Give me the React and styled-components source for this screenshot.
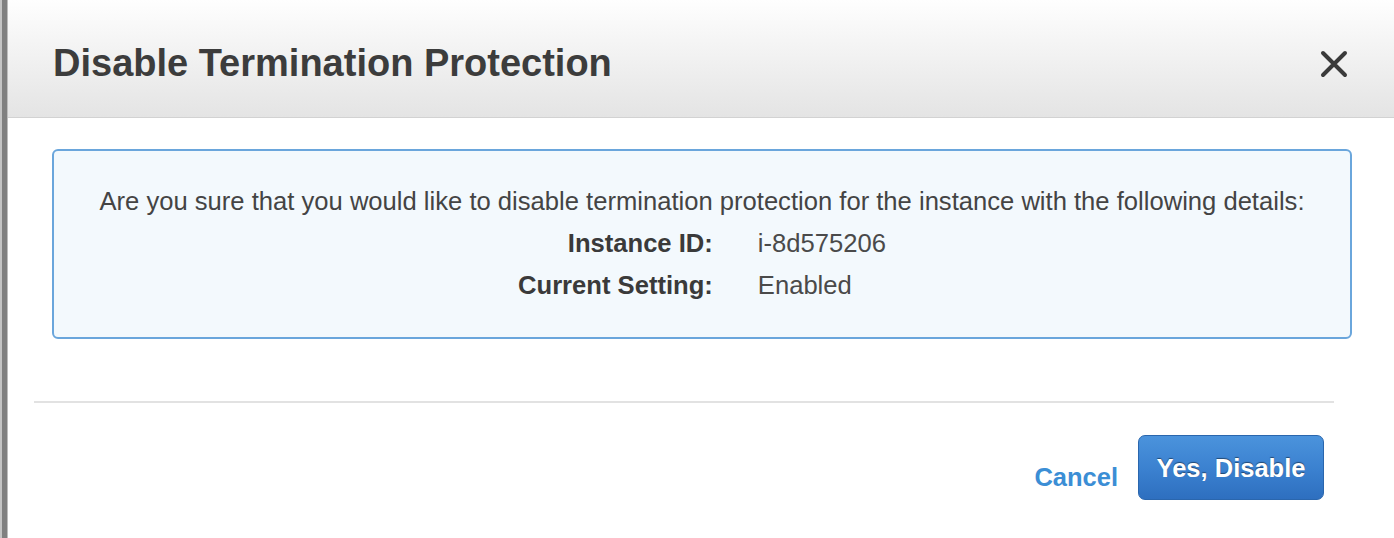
import React from "react";
import styled, { createGlobalStyle } from "styled-components";

const GlobalStyle = createGlobalStyle`
  html, body {
    margin: 0;
    padding: 0;
    background: #ffffff;
  }
  body {
    font-family: "Liberation Sans", Arial, sans-serif;
    overflow: hidden;
  }
`;

const Frame = styled.div`
  display: flex;
  height: 538px;
  border-left: 2px solid #c4c4c4;
`;

const Edge = styled.div`
  width: 5px;
  background: #808080;
  border-right: 1px solid #bdbdbd;
`;

const Dialog = styled.div`
  flex: 1;
  display: flex;
  flex-direction: column;
  background: #ffffff;
`;

const Header = styled.div`
  height: 118px;
  box-sizing: border-box;
  display: flex;
  align-items: center;
  justify-content: space-between;
  padding: 10px 45px 0 45px;
  background: linear-gradient(to bottom, #fefefe 0%, #f1f1f1 50%, #e4e4e4 100%);
  border-bottom: 1px solid #d2d2d2;
`;

const Title = styled.h1`
  margin: 0;
  font-size: 38px;
  font-weight: bold;
  color: #3c3c3c;
`;

const Close = styled.button`
  border: 0;
  background: none;
  padding: 0;
  display: flex;
  color: #3a3a3a;
  cursor: pointer;
`;

const Body = styled.div`
  padding: 31px 42px 0 44px;
`;

const InfoBox = styled.div`
  height: 190px;
  box-sizing: border-box;
  border: 2px solid #6aa6dc;
  border-radius: 6px;
  background: #f3f9fd;
  padding: 36px 20px 0;
  display: flex;
  flex-direction: column;
  align-items: center;
  color: #444444;
`;

const Lead = styled.p`
  margin: 0 0 13px;
  font-size: 25.6px;
`;

const Details = styled.div`
  display: grid;
  grid-template-columns: auto auto;
  column-gap: 45px;
  row-gap: 13px;
  font-size: 25.6px;
`;

const Label = styled.span`
  font-weight: bold;
  text-align: right;
  color: #3a3a3a;
`;

const Value = styled.span`
  color: #4a4a4a;
`;

const Divider = styled.hr`
  margin: 62px 60px 0 26px;
  border: 0;
  border-top: 2px solid #e2e2e2;
`;

const Footer = styled.div`
  display: flex;
  justify-content: flex-end;
  align-items: center;
  gap: 20px;
  padding: 32px 70px 0 0;
`;

const LinkButton = styled.button`
  border: 0;
  background: none;
  padding: 0;
  margin-top: 20px;
  font-family: inherit;
  font-size: 25.5px;
  font-weight: bold;
  color: #3b8ed5;
  cursor: pointer;
`;

const PrimaryButton = styled.button`
  width: 186px;
  height: 65px;
  padding: 2px 0 0;
  border: 1px solid #2a66ad;
  border-radius: 7px;
  background: linear-gradient(to bottom, #4b93dc 0%, #3a80cf 55%, #2e6fbf 100%);
  font-family: inherit;
  font-size: 25.5px;
  font-weight: bold;
  color: #ffffff;
  text-shadow: 0 -1px 1px rgba(0, 0, 0, 0.45);
  cursor: pointer;
`;

export default function App() {
  return (
    <>
      <GlobalStyle />
      <Frame>
        <Edge />
        <Dialog>
          <Header>
            <Title>Disable Termination Protection</Title>
            <Close aria-label="Close">
              <svg width="30" height="30" viewBox="0 0 30 30">
                <path
                  d="M4 4 L26 26 M26 4 L4 26"
                  stroke="currentColor"
                  strokeWidth="4"
                  strokeLinecap="round"
                />
              </svg>
            </Close>
          </Header>
          <Body>
            <InfoBox>
              <Lead>
                Are you sure that you would like to disable termination
                protection for the instance with the following details:
              </Lead>
              <Details>
                <Label>Instance ID:</Label>
                <Value>i-8d575206</Value>
                <Label>Current Setting:</Label>
                <Value>Enabled</Value>
              </Details>
            </InfoBox>
          </Body>
          <Divider />
          <Footer>
            <LinkButton>Cancel</LinkButton>
            <PrimaryButton>Yes, Disable</PrimaryButton>
          </Footer>
        </Dialog>
      </Frame>
    </>
  );
}
